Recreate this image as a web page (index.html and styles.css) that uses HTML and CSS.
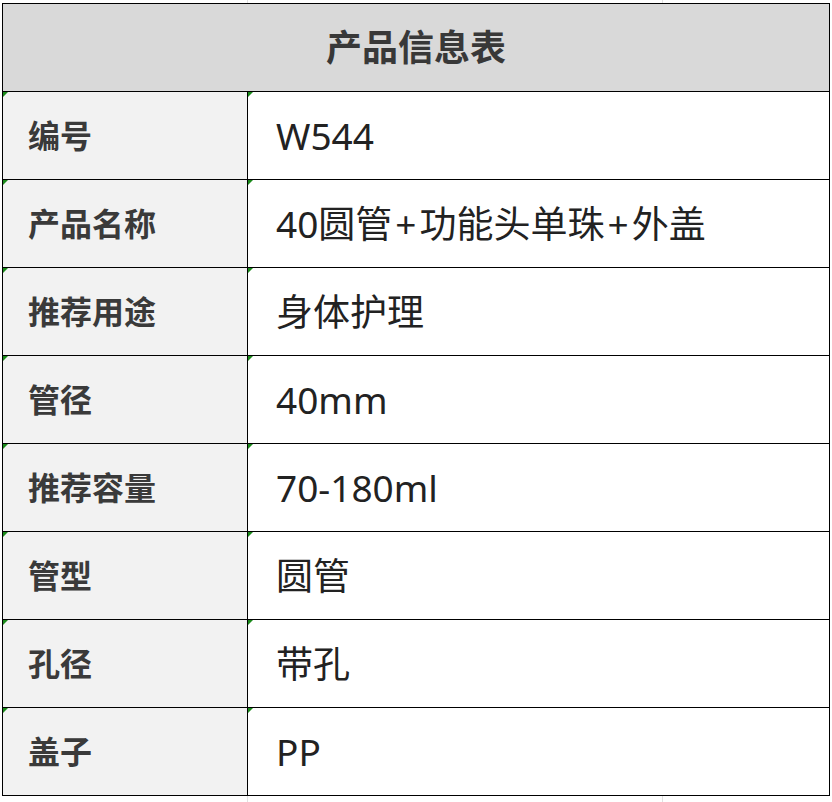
FILE: index.html
```html
<!DOCTYPE html>
<html lang="zh-CN">
<head>
<meta charset="utf-8">
<title>产品信息表</title>
<link rel="stylesheet" href="styles.css">
</head>
<body>
<table class="info">
  <colgroup>
    <col class="col-label">
    <col class="col-value">
  </colgroup>
  <thead>
    <tr><th class="title" colspan="2">产品信息表</th></tr>
  </thead>
  <tbody>
    <tr><td class="label">编号</td><td class="value">W544</td></tr>
    <tr><td class="label">产品名称</td><td class="value">40圆管<span class="plus">+</span>功能头单珠<span class="plus">+</span>外盖</td></tr>
    <tr><td class="label">推荐用途</td><td class="value">身体护理</td></tr>
    <tr><td class="label">管径</td><td class="value">40mm</td></tr>
    <tr><td class="label">推荐容量</td><td class="value">70-180ml</td></tr>
    <tr><td class="label">管型</td><td class="value">圆管</td></tr>
    <tr><td class="label">孔径</td><td class="value">带孔</td></tr>
    <tr><td class="label">盖子</td><td class="value">PP</td></tr>
  </tbody>
</table>
</body>
</html>
```

FILE: styles.css
```css
html, body {
  margin: 0;
  padding: 0;
}
body {
  width: 832px;
  height: 802px;
  overflow: hidden;
  background-color: #fff;
  background-image:
    linear-gradient(#e1e1e1, #e1e1e1),
    linear-gradient(#e1e1e1, #e1e1e1);
  background-size: 1px 100%, 1px 100%;
  background-position: 247px 0, 662px 0;
  background-repeat: no-repeat;
  font-family: "Noto Sans", "Noto Sans CJK SC", sans-serif;
}
.info {
  border-collapse: collapse;
  margin: 3px 0 0 2px;
  width: 828px;
  table-layout: fixed;
}
.col-label {
  width: 245px;
}
.info th, .info td {
  border: 1px solid #000;
  padding: 0;
  height: 87px;
  vertical-align: middle;
  white-space: nowrap;
}
.title {
  background: #d9d9d9;
  text-align: center;
  font-size: 36px;
  font-weight: 700;
  color: #383838;
  line-height: 40px;
}
.label {
  position: relative;
  background: #f2f2f2;
  padding-left: 25px !important;
  font-size: 32px;
  font-weight: 700;
  color: #3a3a3a;
  line-height: 40px;
}
.value {
  position: relative;
  background: #fff;
  padding-left: 28px !important;
  font-size: 37px;
  color: #222;
  line-height: 44px;
}
.plus {
  margin: 0 3px;
}
.label::before, .value::before {
  content: "";
  position: absolute;
  top: 0;
  left: 0;
  width: 0;
  height: 0;
  border-top: 5px solid #1a8a1a;
  border-right: 5px solid transparent;
}
```
